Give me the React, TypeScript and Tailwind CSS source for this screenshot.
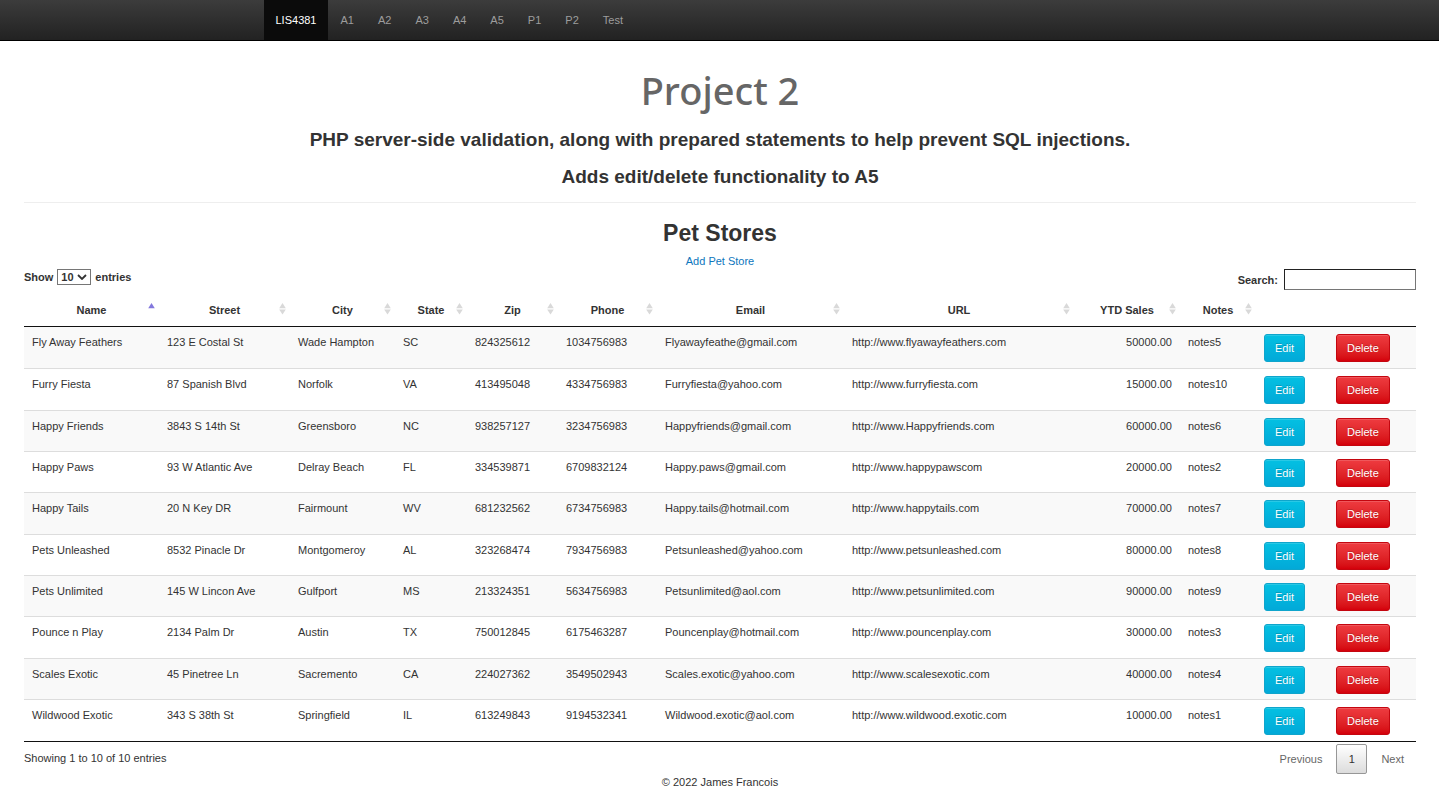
const navItems = ['A1', 'A2', 'A3', 'A4', 'A5', 'P1', 'P2', 'Test'];

const columns = ['Name', 'Street', 'City', 'State', 'Zip', 'Phone', 'Email', 'URL', 'YTD Sales', 'Notes'];

const stores: string[][] = [
  ['Fly Away Feathers', '123 E Costal St', 'Wade Hampton', 'SC', '824325612', '1034756983', 'Flyawayfeathe@gmail.com', 'http://www.flyawayfeathers.com', '50000.00', 'notes5'],
  ['Furry Fiesta', '87 Spanish Blvd', 'Norfolk', 'VA', '413495048', '4334756983', 'Furryfiesta@yahoo.com', 'http://www.furryfiesta.com', '15000.00', 'notes10'],
  ['Happy Friends', '3843 S 14th St', 'Greensboro', 'NC', '938257127', '3234756983', 'Happyfriends@gmail.com', 'http://www.Happyfriends.com', '60000.00', 'notes6'],
  ['Happy Paws', '93 W Atlantic Ave', 'Delray Beach', 'FL', '334539871', '6709832124', 'Happy.paws@gmail.com', 'http://www.happypawscom', '20000.00', 'notes2'],
  ['Happy Tails', '20 N Key DR', 'Fairmount', 'WV', '681232562', '6734756983', 'Happy.tails@hotmail.com', 'http://www.happytails.com', '70000.00', 'notes7'],
  ['Pets Unleashed', '8532 Pinacle Dr', 'Montgomeroy', 'AL', '323268474', '7934756983', 'Petsunleashed@yahoo.com', 'http://www.petsunleashed.com', '80000.00', 'notes8'],
  ['Pets Unlimited', '145 W Lincon Ave', 'Gulfport', 'MS', '213324351', '5634756983', 'Petsunlimited@aol.com', 'http://www.petsunlimited.com', '90000.00', 'notes9'],
  ['Pounce n Play', '2134 Palm Dr', 'Austin', 'TX', '750012845', '6175463287', 'Pouncenplay@hotmail.com', 'http://www.pouncenplay.com', '30000.00', 'notes3'],
  ['Scales Exotic', '45 Pinetree Ln', 'Sacremento', 'CA', '224027362', '3549502943', 'Scales.exotic@yahoo.com', 'http://www.scalesexotic.com', '40000.00', 'notes4'],
  ['Wildwood Exotic', '343 S 38th St', 'Springfield', 'IL', '613249843', '9194532341', 'Wildwood.exotic@aol.com', 'http://www.wildwood.exotic.com', '10000.00', 'notes1'],
];

function SortIcon({ active }: { active: boolean }) {
  return (
    <svg className="mb-0.5 h-3 w-[7px] justify-self-end" viewBox="0 0 7 12" aria-hidden="true">
      <path d="M3.5 0 6.8 5.2H.2Z" fill={active ? '#8378dd' : '#d9d9d9'} />
      {!active && <path d="M3.5 11.6 6.8 6.4H.2Z" fill="#d9d9d9" />}
    </svg>
  );
}

function Navbar() {
  return (
    <nav className="border-b border-black bg-linear-to-b from-[#3c3c3c] to-[#222]">
      <div className="mx-auto flex max-w-[936px] px-3">
        <a href="#" className="bg-[#0b0b0b] px-3 py-3 leading-4 text-white">LIS4381</a>
        {navItems.map((item) => (
          <a key={item} href="#" className="px-3 py-3 leading-4 text-[#9d9d9d]">{item}</a>
        ))}
      </div>
    </nav>
  );
}

function StoreTable() {
  return (
    <table className="w-full table-fixed border-collapse border-b border-[#111]">
      <colgroup>
        <col className="w-[135px]" />
        <col className="w-[131px]" />
        <col className="w-[105px]" />
        <col className="w-[72px]" />
        <col className="w-[91px]" />
        <col className="w-[99px]" />
        <col className="w-[187px]" />
        <col className="w-[230px]" />
        <col className="w-[106px]" />
        <col className="w-[76px]" />
        <col className="w-[72px]" />
        <col className="w-[88px]" />
      </colgroup>
      <thead>
        <tr className="border-b border-[#111]">
          {columns.map((name, i) => (
            <th key={name} className="p-0">
              <button type="button" className="grid h-8 w-full grid-cols-[1fr_auto_1fr] items-center px-1 font-bold">
                <span className="col-start-2">{name}</span>
                <SortIcon active={i === 0} />
              </button>
            </th>
          ))}
          <td />
          <td />
        </tr>
      </thead>
      <tbody>
        {stores.map((row) => (
          <tr
            key={row[0]}
            className="h-[41px] border-t border-[#ddd] align-top first:h-[42px] first:border-[#111] last:h-[42px] odd:bg-[#f9f9f9] nth-[3n+2]:h-[42px]"
          >
            {row.map((value, i) => (
              <td key={columns[i]} className={i === 8 ? 'px-2 pt-[7px] text-right whitespace-nowrap' : 'px-2 pt-[7px] whitespace-nowrap'}>
                {value}
              </td>
            ))}
            <td className="px-2 pt-[7px]">
              <button
                type="button"
                className="block h-7 rounded-[3px] border border-[#0fa5cc] bg-linear-to-b from-[#04c0e2] to-[#02a9d8] px-2.5 text-white shadow-[inset_0_1px_0_rgba(255,255,255,0.15)] text-shadow-[0_-1px_0_rgba(0,0,0,0.2)]"
              >
                Edit
              </button>
            </td>
            <td className="px-2 pt-[7px]">
              <button
                type="button"
                className="block h-7 rounded-[3px] border border-[#c4060f] bg-linear-to-b from-[#ee3b40] to-[#d4000a] px-2.5 text-white shadow-[inset_0_1px_0_rgba(255,255,255,0.15)] text-shadow-[0_-1px_0_rgba(0,0,0,0.2)]"
              >
                Delete
              </button>
            </td>
          </tr>
        ))}
      </tbody>
    </table>
  );
}

export default function App() {
  return (
    <div className="bg-white font-['Liberation_Sans',Arial,sans-serif] text-[11px] leading-4 text-[#333]">
      <Navbar />
      <main className="pt-[27px] pr-[23px] pl-6">
        <header className="border-b border-[#eee] pb-[15px] text-center">
          <h1 className="font-['Noto_Sans',sans-serif] text-[38px] leading-11 font-medium text-[#666]">Project 2</h1>
          <h3 className="mt-[17px] text-[19px] leading-[21px] font-bold">
            PHP server-side validation, along with prepared statements to help prevent SQL injections.
          </h3>
          <h3 className="mt-4 text-[19px] leading-[21px] font-bold">Adds edit/delete functionality to A5</h3>
        </header>
        <div className="pt-4 text-center">
          <h2 className="text-[23px] leading-7 font-bold">Pet Stores</h2>
          <a href="#" className="mt-1.5 inline-block text-[#0d76bd]">Add Pet Store</a>
        </div>
        <div className="flex items-start justify-between">
          <label className="flex items-center gap-1 font-bold">
            Show
            <span className="grid items-center">
              <select
                defaultValue="10"
                className="col-start-1 row-start-1 h-4 w-[34px] appearance-none rounded-none border border-[#767676] bg-white pl-[3px] leading-none font-bold"
              >
                <option>10</option>
                <option>25</option>
                <option>50</option>
                <option>100</option>
              </select>
              <svg className="pointer-events-none col-start-1 row-start-1 mr-1 h-1.5 w-2.5 justify-self-end" viewBox="0 0 10 6" aria-hidden="true">
                <path d="M1 1l4 4 4-4" fill="none" stroke="#333" strokeWidth="1.8" />
              </svg>
            </span>
            entries
          </label>
          <label className="flex items-center gap-1.5 font-bold">
            Search:
            <input type="search" className="h-[21px] w-[132px] border border-[#767676] border-t-[#222] border-l-[#222] bg-white px-1 font-normal" />
          </label>
        </div>
        <div className="pt-1">
          <StoreTable />
        </div>
        <div className="flex items-start justify-between pt-0.5">
          <p className="pt-1.5">Showing 1 to 10 of 10 entries</p>
          <div className="flex items-center text-[#666]">
            <button type="button" className="h-[30px] px-3.5">Previous</button>
            <button type="button" className="h-[30px] w-[31px] rounded-xs border border-[#979797] bg-linear-to-b from-white to-[#dcdcdc] text-[#333]">1</button>
            <button type="button" className="h-[30px] pr-3 pl-3.5">Next</button>
          </div>
        </div>
        <footer className="text-center leading-4">© 2022 James Francois</footer>
      </main>
    </div>
  );
}
